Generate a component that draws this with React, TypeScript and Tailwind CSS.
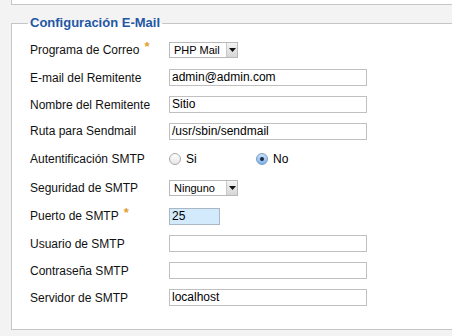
const font = { fontFamily: '"Liberation Sans", Arial, sans-serif' };

type Row = {
  label: string;
  h: string;
  required?: boolean;
  kind: 'text' | 'select' | 'radio' | 'short';
  value?: string;
};

const rows: Row[] = [
  { label: 'Programa de Correo', h: 'h-[28px]', required: true, kind: 'select', value: 'PHP Mail' },
  { label: 'E-mail del Remitente', h: 'h-[27px]', kind: 'text', value: 'admin@admin.com' },
  { label: 'Nombre del Remitente', h: 'h-[27px]', kind: 'text', value: 'Sitio' },
  { label: 'Ruta para Sendmail', h: 'h-[26px]', kind: 'text', value: '/usr/sbin/sendmail' },
  { label: 'Autentificación SMTP', h: 'h-[29px]', kind: 'radio' },
  { label: 'Seguridad de SMTP', h: 'h-[29px]', kind: 'select', value: 'Ninguno' },
  { label: 'Puerto de SMTP', h: 'h-[28px]', required: true, kind: 'short', value: '25' },
  { label: 'Usuario de SMTP', h: 'h-[27px]', kind: 'text', value: '' },
  { label: 'Contraseña SMTP', h: 'h-[27px]', kind: 'text', value: '' },
  { label: 'Servidor de SMTP', h: 'h-[27px]', kind: 'text', value: 'localhost' },
];

function Select({ value }: { value: string }) {
  return (
    <div className="flex h-[16px] w-[69px] items-stretch border border-[#b9b9b9] bg-white">
      <span className="flex-1 pl-[4px] text-[11px] leading-[14px] text-black">{value}</span>
      <span className="flex w-[11px] items-center justify-center border-l border-[#c8c8c8] bg-gradient-to-b from-[#f4f4f4] to-[#d6d6d6]">
        <svg width="7" height="4" viewBox="0 0 7 4">
          <path d="M0 0h7L3.5 4z" fill="#111" />
        </svg>
      </span>
    </div>
  );
}

function Radio({ checked, label }: { checked?: boolean; label: string }) {
  return (
    <div className="flex items-center gap-[5px]">
      <span
        className={
          checked
            ? 'flex h-[12px] w-[12px] items-center justify-center rounded-full border border-[#7a9cc4] bg-gradient-to-b from-[#c9e1fa] to-[#7fb2ea]'
            : 'h-[12px] w-[12px] rounded-full border border-[#a9a9a9] bg-gradient-to-b from-white to-[#e6e6e6]'
        }
      >
        {checked && <span className="h-[4px] w-[4px] rounded-full bg-[#1b2a3a]" />}
      </span>
      <span className="text-[12px] text-black">{label}</span>
    </div>
  );
}

function Field({ row }: { row: Row }) {
  if (row.kind === 'select') return <Select value={row.value ?? ''} />;
  if (row.kind === 'radio')
    return (
      <div className="flex items-center">
        <div className="w-[87px]">
          <Radio label="Si" />
        </div>
        <Radio checked label="No" />
      </div>
    );
  if (row.kind === 'short')
    return (
      <div className="h-[17px] w-[51px] border border-[#a9b8c4] bg-[#d2eafc] pl-[2px] text-[12px] leading-[15px] text-black">
        {row.value}
      </div>
    );
  return (
    <div className="h-[17px] w-[198px] border border-[#c0c0c0] bg-white pl-[2px] text-[12px] leading-[15px] text-black">
      {row.value}
    </div>
  );
}

export default function App() {
  return (
    <div className="h-[336px] w-[452px] overflow-hidden bg-[#f3f3f3] pl-[11px]" style={font}>
      <div className="w-[480px]">
        {/* bottom of the panel above */}
        <div className="h-[5px] border-b border-l border-[#c6c6c6] bg-white" />

        <fieldset className="mt-[10px] border border-[#c6c6c6] bg-white pb-[18px] pl-[18px] pt-[5px]">
          <legend className="-ml-[2px] px-[2px] text-[13px] font-bold leading-[16px] text-[#1f57a4]">
            Configuración E-Mail
          </legend>

          {rows.map(row => (
            <div key={row.label} className={`flex items-center ${row.h}`}>
              <div className="flex w-[139px] items-start text-[12px] text-[#111]">
                {row.label}
                {row.required && <span className="ml-[5px] text-[13px] font-bold leading-[12px] text-[#e3a033]">*</span>}
              </div>
              <Field row={row} />
            </div>
          ))}
        </fieldset>
      </div>
    </div>
  );
}
